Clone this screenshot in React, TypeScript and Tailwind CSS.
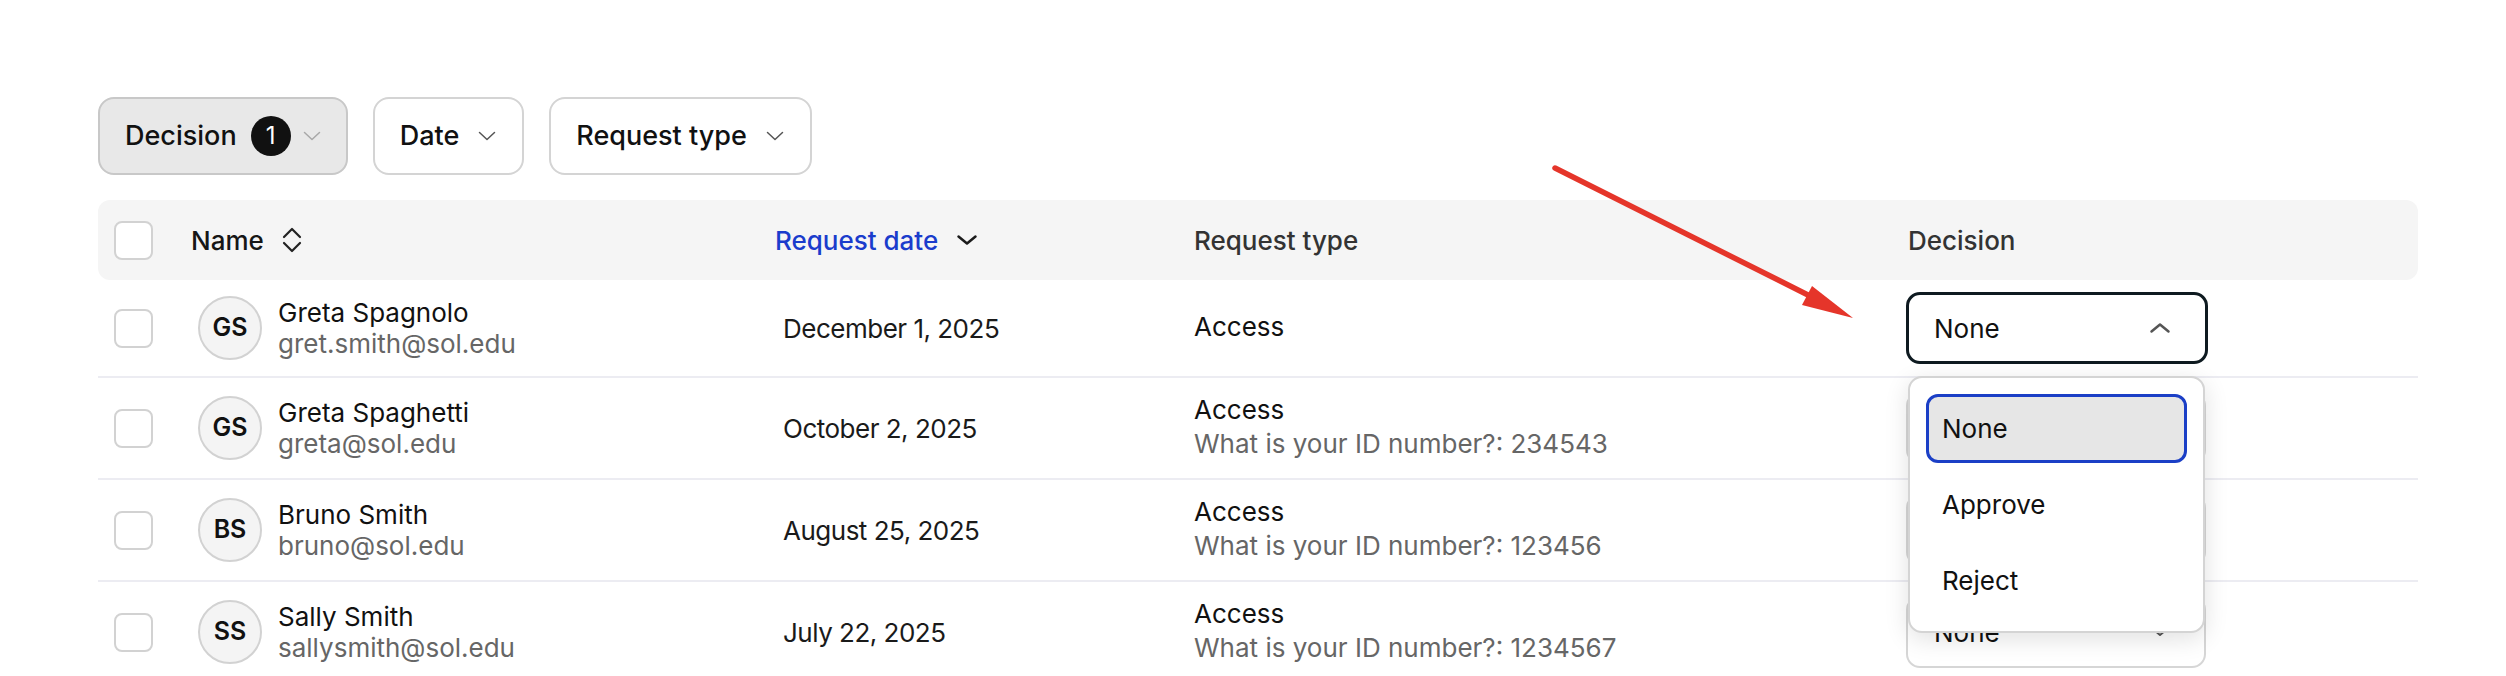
import React from "react";

interface Req {
  initials: string;
  name: string;
  email: string;
  date: string;
  detail?: string;
}

const rows: Req[] = [
  { initials: "GS", name: "Greta Spagnolo", email: "gret.smith@sol.edu", date: "December 1, 2025" },
  { initials: "GS", name: "Greta Spaghetti", email: "greta@sol.edu", date: "October 2, 2025", detail: "What is your ID number?: 234543" },
  { initials: "BS", name: "Bruno Smith", email: "bruno@sol.edu", date: "August 25, 2025", detail: "What is your ID number?: 123456" },
  { initials: "SS", name: "Sally Smith", email: "sallysmith@sol.edu", date: "July 22, 2025", detail: "What is your ID number?: 1234567" },
];

function Chevron({ up = false, className = "", w = 22, h = 12, sw = 2.5 }: { up?: boolean; className?: string; w?: number; h?: number; sw?: number }) {
  return (
    <svg width={w} height={h} viewBox={`0 0 ${w} ${h}`} className={className} fill="none">
      <path
        d={up ? `M${sw} ${h - sw} L${w / 2} ${sw} L${w - sw} ${h - sw}` : `M${sw} ${sw} L${w / 2} ${h - sw} L${w - sw} ${sw}`}
        stroke="currentColor"
        strokeWidth={sw}
        strokeLinecap="round"
        strokeLinejoin="round"
      />
    </svg>
  );
}

function Checkbox() {
  return <div className="w-[39px] h-[39px] rounded-[8px] border-2 border-[#d2d2d2] bg-white" />;
}

function FilterButton({ label, badge, active }: { label: string; badge?: string; active?: boolean }) {
  return (
    <div
      className={
        active
          ? "h-[78px] flex items-center pl-[25px] pr-[25px] rounded-[16px] border-2 border-[#c8c8c8] bg-[#e8e8e8]"
          : "h-[78px] flex items-center pl-[25px] pr-[26px] rounded-[16px] border-2 border-[#d4d4d4] bg-white"
      }
    >
      <span className="text-[27px] font-medium text-[#111]">{label}</span>
      {badge && (
        <span className="ml-[14px] w-10 h-10 rounded-full bg-[#111] text-white text-[24px] flex items-center justify-center">
          {badge}
        </span>
      )}
      <Chevron w={18} h={10} sw={1.5} className={active ? "ml-[12px] text-[#a8a8a8]" : "ml-[19px] text-[#555]"} />
    </div>
  );
}

function Select({ open }: { open?: boolean }) {
  return (
    <div className="relative ml-[-2px]">
      <div
        className={
          open
            ? "w-[302px] h-[72px] rounded-[14px] border-[3px] border-[#0e1a20] bg-white flex items-center justify-between pl-[25px] pr-[34px]"
            : "w-[300px] h-[72px] rounded-[14px] border-2 border-[#d6d6d6] bg-white flex items-center justify-between pl-[26px] pr-[36px]"
        }
      >
        <span className="text-[26px] text-[#111]">None</span>
        {open ? <Chevron up className="text-[#555]" /> : <Chevron w={16} h={9} sw={2} className="text-[#555]" />}
      </div>
      {open && (
        <div className="absolute z-10 top-[84px] left-[2px] w-[297px] rounded-[14px] border-2 border-[#d4d4d4] bg-white shadow-[0_6px_24px_rgba(0,0,0,0.12)] p-4 flex flex-col gap-[7px]">
          {["None", "Approve", "Reject"].map((o, i) => (
            <div
              key={o}
              className={
                i === 0
                  ? "h-[69px] rounded-[12px] border-[3px] border-[#1b3fc6] bg-[#e6e6e6] pl-[13px] flex items-center text-[26px] text-[#111]"
                  : "h-[69px] rounded-[12px] border-[3px] border-transparent pl-[13px] flex items-center text-[26px] text-[#111]"
              }
            >
              {o}
            </div>
          ))}
        </div>
      )}
    </div>
  );
}

export default function App() {
  return (
    <div className="relative h-[676px] overflow-hidden bg-white pl-[98px] pt-[97px] [font-family:Inter,'Liberation_Sans',sans-serif]">
      {/* Filters */}
      <div className="flex gap-[25px]">
        <FilterButton label="Decision" badge="1" active />
        <FilterButton label="Date" />
        <FilterButton label="Request type" />
      </div>

      {/* Table */}
      <div className="w-[2320px] mt-[25px]">
        <div className="grid grid-cols-[93px_584px_419px_714px_1fr] h-20 items-center bg-[#f5f5f5] rounded-[12px]">
          <div className="pl-4">
            <Checkbox />
          </div>
          <div className="flex items-center gap-[17px] text-[26px] font-medium text-[#161616]">
            Name
            <svg width="22" height="28" viewBox="0 0 22 28" fill="none" className="text-[#222]">
              <path d="M3 11 L11 3 L19 11" stroke="currentColor" strokeWidth="2.2" strokeLinecap="round" strokeLinejoin="round" />
              <path d="M3 17 L11 25 L19 17" stroke="currentColor" strokeWidth="2.2" strokeLinecap="round" strokeLinejoin="round" />
            </svg>
          </div>
          <div className="flex items-center gap-[18px] text-[26px] font-medium text-[#1a3ccc]">
            Request date
            <Chevron className="text-[#1b1b1b]" />
          </div>
          <div className="text-[26px] font-medium text-[#333]">Request type</div>
          <div className="text-[26px] font-medium text-[#333]">Decision</div>
        </div>

        {rows.map((r, i) => (
          <div
            key={r.name}
            className={
              i === 0
                ? "grid grid-cols-[93px_584px_419px_714px_1fr] h-[98px] items-center border-b-2 border-[#ececf2]"
                : "grid grid-cols-[93px_584px_419px_714px_1fr] h-[102px] items-center border-b-2 border-[#ececf2]"
            }
          >
            <div className="pl-4">
              <Checkbox />
            </div>
            <div className="flex items-center gap-4 pl-[7px]">
              <div className="w-16 h-16 rounded-full border-2 border-[#d2d2d2] bg-[#f4f4f4] flex items-center justify-center text-[25px] font-semibold text-[#111]">
                {r.initials}
              </div>
              <div className="leading-[31px]">
                <div className="text-[26px] text-[#111]">{r.name}</div>
                <div className="text-[26px] text-[#666]">{r.email}</div>
              </div>
            </div>
            <div className="pl-2 text-[26px] tracking-[-0.5px] text-[#1a1a1a]">{r.date}</div>
            <div className="leading-[34px] -mt-[2px]">
              <div className="text-[26px] text-[#111]">Access</div>
              {r.detail && <div className="text-[26px] text-[#666]">{r.detail}</div>}
            </div>
            <div>
              <Select open={i === 0} />
            </div>
          </div>
        ))}
      </div>

      {/* Annotation arrow */}
      <svg width="330" height="180" viewBox="0 0 330 180" className="absolute z-20 left-[1540px] top-[150px]" fill="none">
        <path d="M15 18 L268 145" stroke="#e5352a" strokeWidth="5.5" strokeLinecap="round" />
        <path d="M313 168 L272 136 L262 155 Z" fill="#e5352a" />
      </svg>
    </div>
  );
}
